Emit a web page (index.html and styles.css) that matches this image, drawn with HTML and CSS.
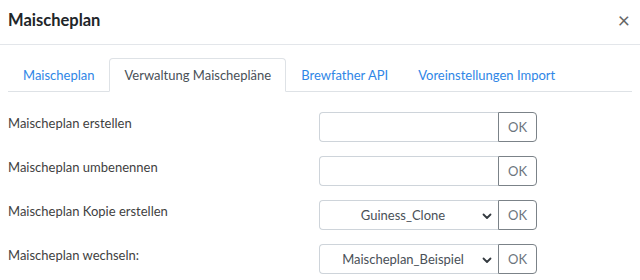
FILE: index.html
```html
<!DOCTYPE html>
<html lang="de">
<head>
<meta charset="utf-8">
<link rel="stylesheet" href="styles.css">
</head>
<body>
<div class="modal">
  <div class="modal-header">
    <h5 class="modal-title">Maischeplan</h5>
    <span class="close">×</span>
  </div>
  <div class="modal-body">
    <ul class="tabs">
      <li class="tab">Maischeplan</li>
      <li class="tab active">Verwaltung Maischepläne</li>
      <li class="tab">Brewfather API</li>
      <li class="tab">Voreinstellungen Import</li>
    </ul>
    <div class="form">
      <div class="row">
        <label class="label">Maischeplan erstellen</label>
        <div class="group"><input class="field" type="text"><button class="btn">OK</button></div>
      </div>
      <div class="row">
        <label class="label">Maischeplan umbenennen</label>
        <div class="group"><input class="field" type="text"><button class="btn">OK</button></div>
      </div>
      <div class="row">
        <label class="label">Maischeplan Kopie erstellen</label>
        <div class="group">
          <div class="select"><span class="sel-text">Guiness_Clone</span>
            <svg class="chev" width="10" height="8" viewBox="0 0 10 8"><path d="M1.5 2.5 L5 6 L8.5 2.5" fill="none" stroke="#343a40" stroke-width="1.8" stroke-linecap="round" stroke-linejoin="round"/></svg>
          </div><button class="btn">OK</button></div>
      </div>
      <div class="row">
        <label class="label">Maischeplan wechseln:</label>
        <div class="group">
          <div class="select"><span class="sel-text">Maischeplan_Beispiel</span>
            <svg class="chev" width="10" height="8" viewBox="0 0 10 8"><path d="M1.5 2.5 L5 6 L8.5 2.5" fill="none" stroke="#343a40" stroke-width="1.8" stroke-linecap="round" stroke-linejoin="round"/></svg>
          </div><button class="btn">OK</button></div>
      </div>
    </div>
  </div>
</div>
</body>
</html>
```
FILE: styles.css
```css
html, body {
  margin: 0;
  padding: 0;
  background: #fff;
}
body {
  font-family: "Lato", "Open Sans", sans-serif;
  color: #3a3a3a;
  width: 640px;
  height: 280px;
  overflow: hidden;
}
.modal-header {
  height: 44px;
  border-bottom: 1px solid #e3e6ea;
  display: flex;
  align-items: center;
  justify-content: space-between;
  padding: 0 10px 0 8px;
}
.modal-title {
  margin: 0;
  font-size: 16.5px;
  font-weight: 700;
  color: #212529;
  padding-bottom: 4px;
}
.close {
  font-size: 21px;
  color: #666;
  padding-bottom: 6px;
}
.modal-body {
  padding: 13px 8px 0 8px;
}
.tabs {
  list-style: none;
  margin: 0;
  padding: 0;
  display: flex;
  border-bottom: 1px solid #dee2e6;
  height: 33px;
}
.tab {
  padding: 0 14px;
  line-height: 33px;
  font-size: 13px;
  color: #2f86e6;
  border: 1px solid transparent;
  border-top-left-radius: 4px;
  border-top-right-radius: 4px;
  margin-bottom: -1px;
}
.tab.active {
  color: #495057;
  border-color: #dee2e6 #dee2e6 #fff;
  background: #fff;
}
.form {
  padding-top: 20px;
  display: flex;
  flex-direction: column;
  gap: 14px;
}
.row {
  display: grid;
  grid-template-columns: 311px 218px;
  align-items: center;
  height: 30px;
}
.label {
  font-size: 13px;
  color: #3f3f3f;
  padding-bottom: 9px;
}
.group {
  display: flex;
  height: 30px;
}
.field, .select {
  box-sizing: border-box;
  width: 179px;
  height: 30px;
  border: 1px solid #ced4da;
  border-radius: 4px 0 0 4px;
  border-right: none;
  margin: 0;
  padding: 0 8px;
  font-family: inherit;
  font-size: 13px;
  background: #fff;
}
.select {
  display: flex;
  align-items: center;
  position: relative;
  padding: 0 20px 0 8px;
  justify-content: center;
  color: #495057;
}
.chev {
  position: absolute;
  right: 6px;
  top: 11px;
}
.btn {
  box-sizing: border-box;
  width: 39px;
  height: 30px;
  margin: 0;
  border: 1px solid #7b8288;
  border-radius: 0 4px 4px 0;
  background: #fff;
  color: #6c757d;
  font-family: inherit;
  font-size: 13px;
  padding: 0;
}
```
